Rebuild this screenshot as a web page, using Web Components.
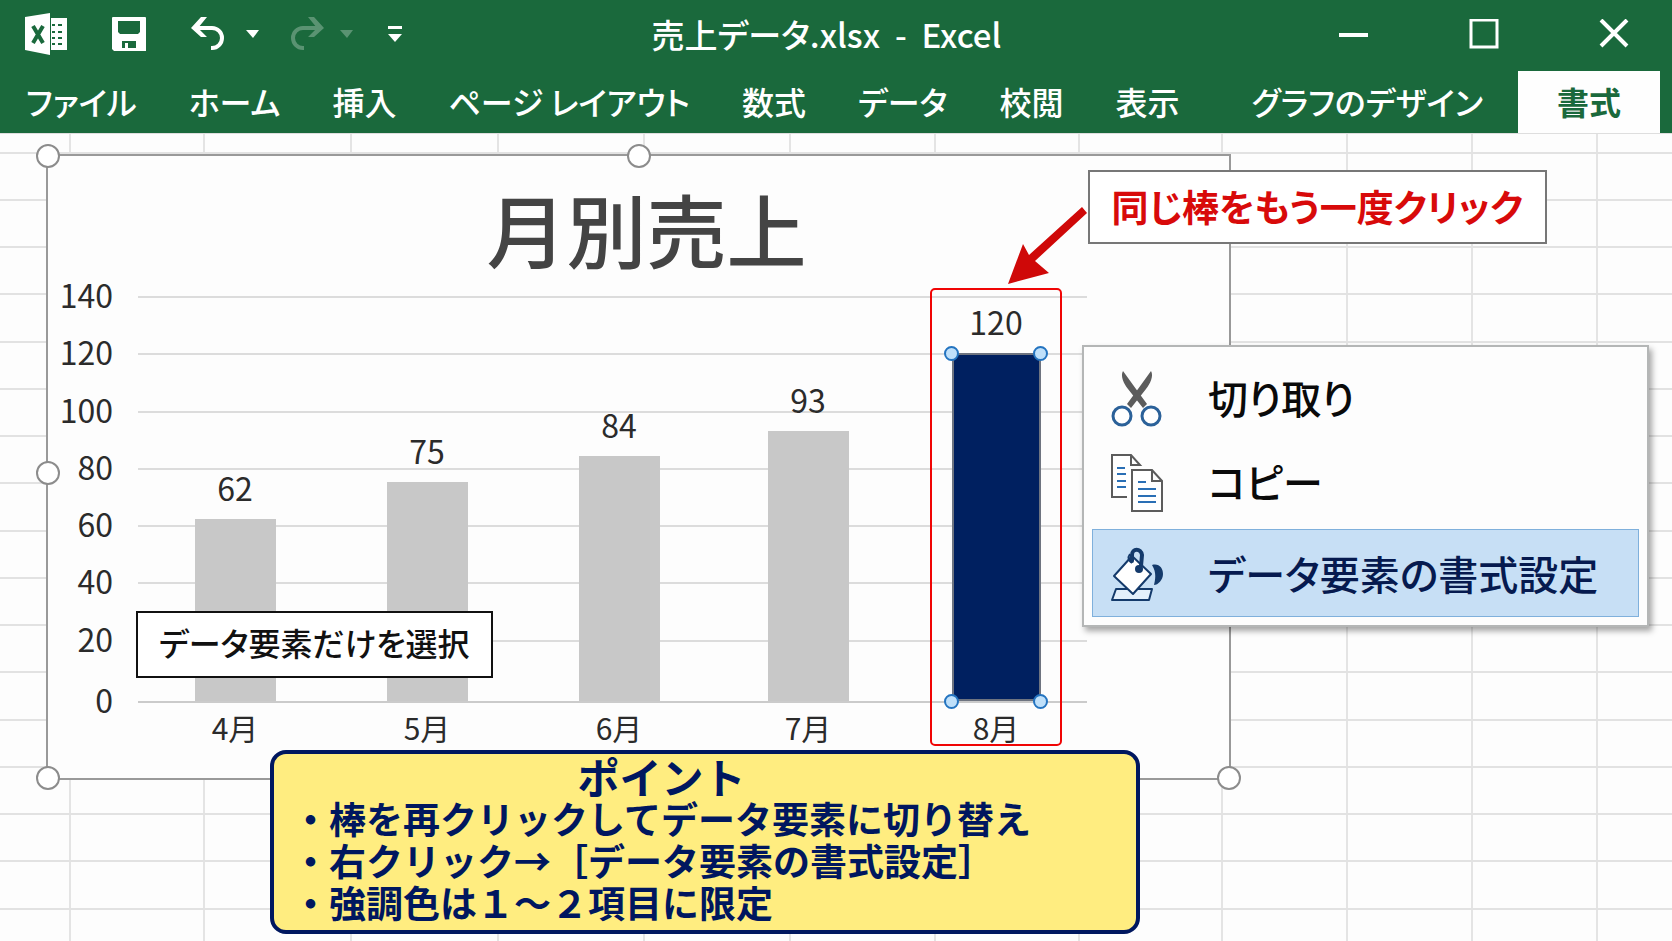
<!DOCTYPE html>
<html lang="ja">
<head>
<meta charset="utf-8">
<meta name="viewport" content="width=device-width, initial-scale=1">
<title>売上データ.xlsx - Excel</title>
<style>
    body {
        margin: 0;
        font-family: "Noto Sans CJK JP", "Noto Sans", sans-serif;
        font-weight: 500;
        background: #fdfdfd;
    }
</style>
</head>
<body>
<excel-window>
    <title-bar slot="header">売上データ.xlsx&nbsp; -&nbsp; Excel</title-bar>
    <ribbon-tabs slot="header">
        <ribbon-tab>ファイル</ribbon-tab>
        <ribbon-tab>ホーム</ribbon-tab>
        <ribbon-tab>挿入</ribbon-tab>
        <ribbon-tab>ページ レイアウト</ribbon-tab>
        <ribbon-tab>数式</ribbon-tab>
        <ribbon-tab>データ</ribbon-tab>
        <ribbon-tab>校閲</ribbon-tab>
        <ribbon-tab>表示</ribbon-tab>
        <ribbon-tab contextual>グラフのデザイン</ribbon-tab>
        <ribbon-tab active>書式</ribbon-tab>
    </ribbon-tabs>

    <bar-chart heading="月別売上" max="140" step="20">
        <chart-bar value="62" label="4月"></chart-bar>
        <chart-bar value="75" label="5月"></chart-bar>
        <chart-bar value="84" label="6月"></chart-bar>
        <chart-bar value="93" label="7月"></chart-bar>
        <chart-bar value="120" label="8月" selected></chart-bar>
        <call-out slot="note">データ要素だけを選択</call-out>
    </bar-chart>

    <call-out slot="overlay" kind="alert">同じ棒をもう一度クリック</call-out>

    <context-menu slot="overlay">
        <menu-entry icon="cut">切り取り</menu-entry>
        <menu-entry icon="copy">コピー</menu-entry>
        <menu-entry icon="fill" active>データ要素の書式設定</menu-entry>
    </context-menu>

    <point-note slot="overlay" heading="ポイント">
        <li>・棒を再クリックしてデータ要素に切り替え</li>
        <li>・右クリック→［データ要素の書式設定］</li>
        <li>・強調色は１〜２項目に限定</li>
    </point-note>
</excel-window>

<script>
function render(host, html) {
    const template = document.createElement('template');
    template.innerHTML = html;
    host.attachShadow({ mode: 'open' }).appendChild(template.content.cloneNode(true));
}

class ExcelWindow extends HTMLElement {
    constructor() {
        super();
        render(this, `
            <style>
                :host {
                    display: flex;
                    flex-direction: column;
                    min-height: 100vh;
                }
                header {
                    background: #1a693c;
                    color: #fff;
                }
                main {
                    position: relative;
                    flex: 1;
                    overflow: hidden;
                    box-sizing: border-box;
                    padding: 21px 441px 0 46px;
                }
                .cells {
                    position: absolute;
                    inset: 0;
                    display: grid;
                    grid-template-columns: 71fr 134fr 147fr 147fr 146fr 146fr 145fr 144fr 143fr 125fr 125fr 125fr 74fr;
                    border-top: 1px solid #dedede;
                }
                .cells i {
                    border-right: 2px solid #e4e4e4;
                }
                .cells i:last-of-type {
                    border: 0;
                }
                .rows {
                    position: absolute;
                    inset: 18px 0 0;
                    background: repeating-linear-gradient(
                        #e2e2e2 0 2px, transparent 2px 47px,
                        #e2e2e2 47px 49px, transparent 49px 94px,
                        #e2e2e2 94px 96px, transparent 96px 141px,
                        #e2e2e2 141px 143px, transparent 143px 189px);
                }
            </style>
            <header><slot name="header"></slot></header>
            <main>
                <div class="cells">${'<i></i>'.repeat(13)}<div class="rows"></div></div>
                <slot></slot>
                <slot name="overlay"></slot>
            </main>
        `);
    }
}

class TitleBar extends HTMLElement {
    constructor() {
        super();
        render(this, `
            <style>
                :host {
                    display: grid;
                    grid-template-columns: 1fr auto 1fr;
                    align-items: center;
                    height: 68px;
                    padding: 0 43px 0 24px;
                    font-size: 33px;
                    font-feature-settings: "palt";
                }
                h1 {
                    margin: 0;
                    font: inherit;
                }
                button {
                    display: flex;
                    padding: 0;
                    border: 0;
                    background: none;
                    color: inherit;
                }
                button:disabled {
                    opacity: .28;
                }
                svg {
                    display: block;
                }
                .quick, .controls, .split {
                    display: flex;
                    align-items: center;
                }
                .quick { gap: 45px; }
                .split { gap: 21px; margin-right: -14px; }
                .split + .split { gap: 16px; margin-right: -10px; }
                .controls {
                    justify-content: flex-end;
                    gap: 100px;
                }
            </style>
            <div class="quick">
                <svg width="43" height="44" viewBox="0 0 43 44">
                    <path fill="#fff" d="M1 5 26 1v42L1 38zM27 6h16v32H27z"/>
                    <path stroke="#1a693c" stroke-width="2" d="M28 13h3m3 0h4M28 20h3m3 0h4M28 26h3m3 0h4M28 32h3m3 0h4"/>
                    <path stroke="#1a693c" stroke-width="4" fill="none" d="m9 14 10 17M19 14 9 31"/>
                </svg>
                <button aria-label="上書き保存">
                    <svg width="34" height="34" viewBox="0 0 34 34">
                        <path fill="#fff" fill-rule="evenodd" d="M1 0h32a1 1 0 0 1 1 1v33H2l-2-2V1a1 1 0 0 1 1-1zM6 4v11l2 2h18l2-2V4zM10 24v7h3v-5h3v5h8v-7z"/>
                    </svg>
                </button>
                <div class="split">
                    <button aria-label="元に戻す">
                        <svg width="34" height="34" viewBox="0 0 34 34">
                            <path fill="none" stroke="#fff" stroke-width="4" d="M3 11h18a10 10 0 0 1 0 20h-1"/>
                            <path fill="#fff" d="M10 0h6L7 11l9 9h-6L0 11z"/>
                        </svg>
                    </button>
                    <button aria-label="元に戻す一覧"><svg width="13" height="8"><path fill="#fff" d="M0 0h13L7 8z"/></svg></button>
                </div>
                <div class="split">
                    <button disabled aria-label="やり直し">
                        <svg width="34" height="34" viewBox="0 0 34 34">
                            <path fill="none" stroke="#fff" stroke-width="4" d="M31 11H13a10 10 0 0 0 0 20h1"/>
                            <path fill="#fff" d="M24 0h-6l9 11-9 9h6l10-9z"/>
                        </svg>
                    </button>
                    <button disabled aria-label="やり直し一覧"><svg width="13" height="8"><path fill="#fff" d="M0 0h13L7 8z"/></svg></button>
                </div>
                <button aria-label="クイック アクセス ツール バーのユーザー設定">
                    <svg width="14" height="16"><path fill="#fff" d="M0 0h14v3H0zM0 8h14l-7 8z"/></svg>
                </button>
            </div>
            <h1><slot></slot></h1>
            <div class="controls">
                <button aria-label="最小化"><svg width="30" height="30"><path stroke="#fff" stroke-width="4" d="M0 16h29"/></svg></button>
                <button aria-label="最大化"><svg width="30" height="30"><path fill="none" stroke="#fff" stroke-width="3" d="M2 1h26v27H2z"/></svg></button>
                <button aria-label="閉じる"><svg width="30" height="30"><path stroke="#fff" stroke-width="4" d="m2 1 26 26M28 1 2 27"/></svg></button>
            </div>
        `);
    }
}

class RibbonTabs extends HTMLElement {
    constructor() {
        super();
        render(this, `
            <style>
                :host { display: block; }
                nav {
                    display: flex;
                    align-items: flex-end;
                    height: 65px;
                    padding-right: 12px;
                }
            </style>
            <nav><slot></slot></nav>
        `);
    }
}

class RibbonTab extends HTMLElement {
    constructor() {
        super();
        render(this, `
            <style>
                :host { display: block; }
                :host([contextual]) { margin-left: 20px; }
                :host([active]) { margin-left: auto; }
                button {
                    height: 62px;
                    padding: 0 26px 2px;
                    border: 0;
                    background: none;
                    color: #fff;
                    font: inherit;
                    font-size: 32px;
                    line-height: 48px;
                    font-feature-settings: "palt";
                    white-space: nowrap;
                }
                :host([active]) button {
                    padding: 0 39px 2px;
                    background: #fefefe;
                    color: #1a693c;
                    font-weight: 700;
                }
            </style>
            <button><slot></slot></button>
        `);
    }
}

class BarChart extends HTMLElement {
    connectedCallback() {
        const max = Number(this.getAttribute('max'));
        const step = Number(this.getAttribute('step'));
        const ticks = [];
        for (let v = max; v >= 0; v -= step) {
            ticks.push(`<div class="tick"><span>${v}</span></div>`);
        }
        render(this, `
            <style>
                :host {
                    position: relative;
                    display: block;
                    box-sizing: border-box;
                    padding: 27px 142px 21px 0;
                    border: 2px solid #999;
                    background: #fdfdfd;
                    color: #2b2b2b;
                }
                h2 {
                    margin: 0 -142px 25px 16px;
                    font-size: 80px;
                    line-height: 88px;
                    font-weight: 500;
                    text-align: center;
                    color: #444;
                }
                .plot {
                    position: relative;
                    margin-left: 90px;
                }
                .ticks {
                    position: absolute;
                    inset: 0 0 56px;
                    display: grid;
                    grid-template-rows: repeat(6, 57fr) 61fr 0;
                }
                .tick {
                    position: relative;
                    border-top: 2px solid #dcdcdc;
                }
                .tick:last-child { border-color: #cbcbcb; }
                .tick span {
                    position: absolute;
                    right: 100%;
                    top: -26px;
                    margin-right: 25px;
                    font-size: 32px;
                    line-height: 44px;
                    font-weight: 400;
                }
                .bars {
                    position: relative;
                    display: grid;
                    grid-template-columns: 192fr 192fr 192fr 186fr 190fr;
                    height: 461px;
                    margin: 0 -4px 0 1px;
                }
                .handle {
                    position: absolute;
                    width: 20px;
                    height: 20px;
                    margin: -12px;
                    border: 2px solid #8c8c8c;
                    border-radius: 50%;
                    background: #fff;
                }
                .nw { left: 0; top: 0; }
                .n { left: 50%; top: 0; }
                .w { left: 0; top: 51%; }
                .sw { left: 0; top: 100%; }
                .se { left: 100%; top: 100%; }
                slot[name=note]::slotted(*) {
                    position: absolute;
                    left: -2px;
                    bottom: 79px;
                }
            </style>
            <h2>${this.getAttribute('heading')}</h2>
            <div class="plot">
                <div class="ticks">${ticks.join('')}</div>
                <div class="bars"><slot></slot></div>
                <slot name="note"></slot>
            </div>
            ${['nw', 'n', 'w', 'sw', 'se'].map(p => `<span class="handle ${p}"></span>`).join('')}
        `);
    }
}

class ChartBar extends HTMLElement {
    connectedCallback() {
        const value = this.getAttribute('value');
        render(this, `
            <style>
                :host {
                    position: relative;
                    display: grid;
                    grid-template-rows: minmax(0, 1fr) 56px;
                    justify-items: center;
                    font-size: 32px;
                    line-height: 44px;
                    font-weight: 400;
                }
                .column {
                    display: flex;
                    flex-direction: column;
                    justify-content: flex-end;
                    align-items: center;
                    height: 100%;
                }
                .value { margin-bottom: 10px; }
                .bar {
                    position: relative;
                    flex: none;
                    box-sizing: border-box;
                    width: 81px;
                    height: calc(4px + (100% - 4px) * ${value} / 140);
                    background: #c8c8c8;
                }
                .label {
                    padding-top: 4px;
                    font-size: 30px;
                }
                .frame, .dot { display: none; }
                :host([selected]) .bar {
                    width: 89px;
                    background: #002060;
                    box-shadow: inset 0 0 0 2px #6e7480;
                }
                :host([selected]) .frame {
                    display: block;
                    position: absolute;
                    inset: -8px 29px 11px;
                    border: 2px solid #f00505;
                    border-radius: 5px;
                }
                :host([selected]) .dot {
                    display: block;
                    position: absolute;
                    width: 11px;
                    height: 11px;
                    margin: -7px -8px;
                    border: 2px solid #2474c0;
                    border-radius: 50%;
                    background: #bfe0fa;
                }
                .l { left: 0; }
                .r { left: 100%; }
                .t { top: 0; }
                .b { top: 100%; }
            </style>
            <span class="frame"></span>
            <div class="column">
                <span class="value">${value}</span>
                <div class="bar"><i class="dot l t"></i><i class="dot r t"></i><i class="dot l b"></i><i class="dot r b"></i></div>
            </div>
            <span class="label">${this.getAttribute('label')}</span>
        `);
    }
}

class CallOut extends HTMLElement {
    constructor() {
        super();
        render(this, `
            <style>
                :host {
                    display: block;
                    padding: 6px 21px 10px;
                    border: 2px solid #111;
                    background: #fff;
                    color: #111;
                    font-size: 32px;
                    line-height: 47px;
                    font-feature-settings: "palt";
                    white-space: nowrap;
                }
                svg { display: none; }
                :host([kind=alert]) {
                    position: absolute;
                    top: 37px;
                    right: 125px;
                    padding: 7px 22px 9px;
                    border-color: #777;
                    color: #d80a0a;
                    font-size: 37px;
                    line-height: 54px;
                    font-weight: 700;
                }
                :host([kind=alert]) svg {
                    display: block;
                    position: absolute;
                    right: 100%;
                    top: 34px;
                }
            </style>
            <slot></slot>
            <svg width="84" height="80"><path fill="#cf0808" d="m76 1 5 6-52 48 14 12L2 78l15-40 6 11z"/></svg>
        `);
    }
}

class ContextMenu extends HTMLElement {
    constructor() {
        super();
        render(this, `
            <style>
                :host {
                    position: absolute;
                    top: 212px;
                    right: 23px;
                    width: 547px;
                    padding: 10px 8px 8px;
                    border: 2px solid #b4b6b6;
                    background: #fdfdfd;
                    box-shadow: 3px 4px 6px rgba(0, 0, 0, .35);
                }
            </style>
            <slot></slot>
        `);
    }
}

const menuIcons = {
    cut: `
        <g fill="#5c5c5c"><path d="M13 1c-3 5 1 13 5 18l15 19 4-4-11-15z"/><path d="M41 1c3 5-1 13-5 18L21 38l-4-4 11-15z"/></g>
        <g fill="#fff" stroke="#2b6199" stroke-width="3"><circle cx="12" cy="46" r="9"/><circle cx="41" cy="46" r="9"/></g>`,
    copy: `
        <g fill="#fff" stroke="#5c5c5c" stroke-width="2"><path stroke="none" d="M2 1h19l9 10v32H2z"/><path d="M17 43H2V1h19l9 10h-9V1"/>
        <path d="M22 16h20l10 11v30H22zM42 16v11h10"/></g>
        <path stroke="#2a6fb5" stroke-width="2" d="M7 14h8M7 20h9M7 27h9M7 33h9M28 28h8M28 35h18M28 42h18M28 48h18"/>`,
    fill: `
        <g transform="translate(0 3)"><g stroke="#143a6b" stroke-width="2" stroke-linejoin="round">
        <path fill="#e4f0fb" d="M6 42h36l-3 11H2z"/>
        <path fill="#fff" d="M22 9 4 29l19 18 18-20z"/></g>
        <path fill="none" stroke="#143a6b" stroke-width="4" stroke-linecap="round" d="M22 14V8c0-7 9-7 10 0l-1 11"/>
        <path fill="none" stroke="#143a6b" stroke-width="2" d="M20 7c-3 4-1 7 2 9"/>
        <circle cx="29" cy="22" r="4" fill="#143a6b"/>
        <path fill="#143a6b" d="M42 18c7-2 11 3 11 9 0 6-5 11-9 11 1-5 3-12-2-20z"/></g>`
};

class MenuEntry extends HTMLElement {
    connectedCallback() {
        render(this, `
            <style>
                :host { display: block; }
                :host([active]) { margin-top: 4px; }
                button {
                    display: flex;
                    align-items: center;
                    gap: 44px;
                    box-sizing: border-box;
                    width: 100%;
                    height: 84px;
                    padding: 0 17px;
                    border: 1px solid transparent;
                    background: none;
                    color: #0a0a0a;
                    font: inherit;
                    font-size: 40px;
                    line-height: 56px;
                    font-feature-settings: "palt";
                    white-space: nowrap;
                }
                span { padding-bottom: 5px; }
                :host([active]) span { padding: 0; }
                :host([active]) button {
                    height: 88px;
                    border-color: #7fb0dc;
                    background: #c7dff5;
                    color: #061a4f;
                }
                svg { flex: none; }
            </style>
            <button><svg width="54" height="58" viewBox="0 0 54 58">${menuIcons[this.getAttribute('icon')]}</svg><span><slot></slot></span></button>
        `);
    }
}

class PointNote extends HTMLElement {
    connectedCallback() {
        render(this, `
            <style>
                :host {
                    position: absolute;
                    left: 270px;
                    right: 532px;
                    top: 617px;
                    box-sizing: border-box;
                    padding: 1px 18px 7px;
                    border: 4px solid #00175f;
                    border-radius: 16px;
                    background: #ffed80;
                    color: #00175f;
                    font-size: 37px;
                    line-height: 42px;
                    font-weight: 700;
                }
                .body { width: max-content; }
                h3 {
                    margin: 0;
                    font: inherit;
                    font-size: 42px;
                    text-align: center;
                }
                ul {
                    margin: 0;
                    padding: 0;
                    list-style: none;
                }
                ::slotted(li) { display: block; }
            </style>
            <div class="body">
                <h3>${this.getAttribute('heading')}</h3>
                <ul><slot></slot></ul>
            </div>
        `);
    }
}

customElements.define('excel-window', ExcelWindow);
customElements.define('title-bar', TitleBar);
customElements.define('ribbon-tabs', RibbonTabs);
customElements.define('ribbon-tab', RibbonTab);
customElements.define('bar-chart', BarChart);
customElements.define('chart-bar', ChartBar);
customElements.define('call-out', CallOut);
customElements.define('context-menu', ContextMenu);
customElements.define('menu-entry', MenuEntry);
customElements.define('point-note', PointNote);
</script>
</body>
</html>
